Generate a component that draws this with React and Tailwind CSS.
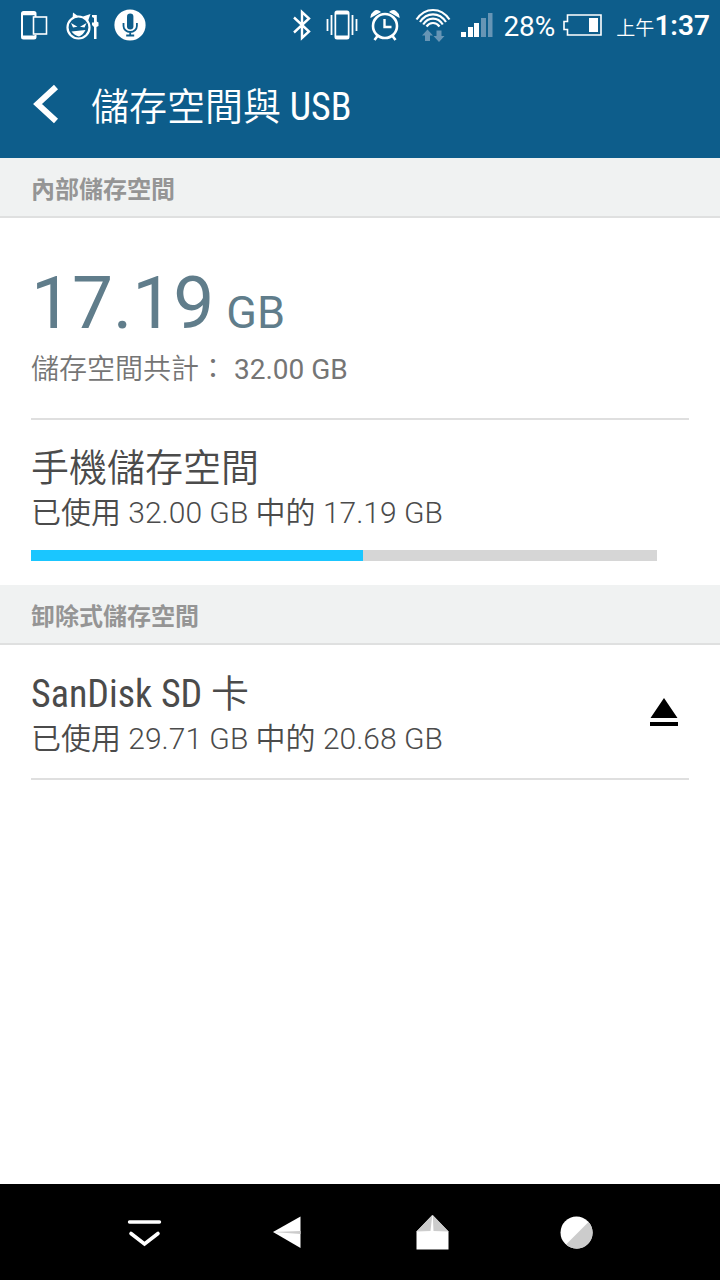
const fontSans = "font-[Roboto,'Noto_Sans_CJK_TC',sans-serif]";
const fontCondensed = "font-['Roboto_Condensed',Roboto,'Noto_Sans_CJK_TC',sans-serif]";

function PhoneLinkIcon() {
  return (
    <svg width="28" height="32" viewBox="0 0 28 32" fill="none" aria-hidden="true">
      <path fill="#fff" fillRule="evenodd" d="M3.500 2h10.500q2.500 0 2.500 2.500V8h-2V6.200H3V26.500h11.500V26h2v2q0 2.500-2.500 2.500H3.500Q1 30.500 1 28V4.500Q1 2 3.500 2Z" />
      <rect x="13.500" y="8" width="13" height="17" stroke="#fff" strokeWidth="1.600" />
    </svg>
  );
}

function DevilIcon() {
  return (
    <svg width="34" height="32" viewBox="0 0 34 32" fill="none" aria-hidden="true">
      <circle cx="12.500" cy="18.500" r="11" stroke="#fff" strokeWidth="2.200" />
      <path fill="#fff" d="M7 3.500 12.500 7.500 6.500 10ZM24.500 5 22 12l-5-4.500Z" />
      <path fill="#fff" d="M5 14 11.500 17.800 7 18.500ZM20.500 14 14 17.800 18.500 18.500ZM5.500 22.500 19.500 21 Q17 26 13 27.500 8.500 26.500 5.500 22.500Z" />
      <path fill="#fff" d="M26 6h4.800v6.500l1.700 1v3.500l-2 1V30h-2.500V18l-2-2v-2.500h2V9l-2-1Z" />
    </svg>
  );
}

function MicIcon() {
  return (
    <svg width="32" height="32" viewBox="0 0 32 32" fill="none" aria-hidden="true">
      <circle cx="16" cy="16" r="15.600" fill="#fff" />
      <rect x="13" y="4.500" width="6.400" height="16" rx="3.200" fill="#0d5d8b" />
      <path d="M9.500 14v3a6.700 6 0 0 0 13.400 0v-3M16.200 23v4M12.200 26.500h8" stroke="#0d5d8b" strokeWidth="1.800" />
    </svg>
  );
}

function BluetoothIcon() {
  return (
    <svg width="18" height="32" viewBox="0 0 18 32" fill="none" aria-hidden="true">
      <path d="M1 8.500 16 22.500 9 29V3l7 6.500L1 23.500" stroke="#fff" strokeWidth="2.400" />
    </svg>
  );
}

function VibrateIcon() {
  return (
    <svg width="34" height="32" viewBox="0 0 34 32" fill="none" aria-hidden="true">
      <path fill="#fff" fillRule="evenodd" d="M12 1.500h10q2.500 0 2.500 2.500v24q0 2.500-2.500 2.500H12q-2.500 0-2.500-2.500V4q0-2.500 2.500-2.500ZM11.200 5.500v21h11.600v-21Z" />
      <path d="M6.500 6v20M27.500 6v20" stroke="#fff" strokeWidth="1.800" />
      <path d="M2.500 10v12M31.500 10v12" stroke="#fff" strokeWidth="1.800" />
    </svg>
  );
}

function AlarmIcon() {
  return (
    <svg width="32" height="32" viewBox="0 0 32 32" fill="none" aria-hidden="true">
      <circle cx="16" cy="17" r="12" stroke="#fff" strokeWidth="2.600" />
      <path d="M15.500 10v8h7" stroke="#fff" strokeWidth="2.400" />
      <path d="m8.500 27-3 4M23.500 27l3 4" stroke="#fff" strokeWidth="2.600" />
      <path fill="#fff" d="M1.500 9Q1 5 4.500 2.500 8-.5 12 3ZM30.500 9Q31 5 27.500 2.500 24-.5 20 3Z" />
    </svg>
  );
}

function WifiIcon() {
  return (
    <svg width="36" height="34" viewBox="0 0 36 34" fill="none" aria-hidden="true">
      <g stroke="#fff" strokeWidth="2.200">
        <path d="M1.500 11.500Q8 2 18 2T34.500 11.500" />
        <path d="M5 14Q10 6.300 18 6.300T31 14" />
        <path d="M8.200 16.500Q12 10.600 18 10.600T27.800 16.500" />
        <path d="M11.500 18.500Q14 15 18 15T24.500 18.500" />
      </g>
      <path fill="#6795b5" d="m12.500 21.500 5.500 6h-3V33h-5v-5.500H7ZM21.500 22.500h5V28h3L24 34l-5.500-6h3Z" />
    </svg>
  );
}

function SignalIcon() {
  return (
    <svg width="32" height="26" viewBox="0 0 32 26" aria-hidden="true">
      <path fill="#fff" d="M0 20h5v5H0zM7 15h5v10H7zM13 11h5v14h-5z" />
      <path fill="#6795b5" d="M20 6h5v19h-5zM27 1h4.500v24H27z" />
    </svg>
  );
}

function BatteryIcon() {
  return (
    <svg width="40" height="22" viewBox="0 0 40 22" fill="none" aria-hidden="true">
      <path d="M4.500 1H38v20H4.500v-5.500H1v-8h3.500Z" stroke="#fff" strokeWidth="1.600" />
      <path fill="#fff" d="M26 4h9v14h-9z" />
    </svg>
  );
}

function StatusBar() {
  return (
    <div className="flex h-[50px] items-center justify-between pl-5 pr-[10px] text-white">
      <div className="flex items-center gap-[18px]">
        <PhoneLinkIcon />
        <DevilIcon />
        <div className="-ml-1"><MicIcon /></div>
      </div>
      <div className="flex items-center">
        <div className="flex items-center gap-[10px]">
          <BluetoothIcon />
          <div className="ml-1"><VibrateIcon /></div>
          <AlarmIcon />
          <div className="ml-1"><WifiIcon /></div>
          <SignalIcon />
          <span className="pt-1 text-[28px] leading-8">28%</span>
          <div className="-ml-0.5"><BatteryIcon /></div>
        </div>
        <div className="ml-[13px] flex items-baseline pt-1">
          <span className="text-[19px] font-[350] leading-8">上午</span>
          <span className="text-[28px] font-semibold leading-8">1:37</span>
        </div>
      </div>
    </div>
  );
}

function SectionHeader({ children }) {
  return (
    <h2 className="flex h-[60px] items-center border-b-2 border-[#dfe0e0] bg-[#f0f2f2] px-[31px] pt-[6px] text-[24px] font-bold leading-8 text-[#959595]">
      {children}
    </h2>
  );
}

function StorageText({ title, used }) {
  return (
    <div>
      <h3 className={`${fontCondensed} text-[38px] font-normal leading-[48px] text-[#4b4b4b]`}>{title}</h3>
      <p className="text-[30px] font-[350] leading-[42px] text-[#4b4b4b]">{used}</p>
    </div>
  );
}

function NavButton({ label, children }) {
  return (
    <button type="button" aria-label={label} className="flex h-24 items-center justify-center">
      <svg width="36" height="36" viewBox="0 0 36 36" fill="none" aria-hidden="true">{children}</svg>
    </button>
  );
}

export default function App() {
  const usedShare = 53.1;
  return (
    <div lang="zh-Hant" className={`${fontSans} flex min-h-screen flex-col bg-white`}>
      <header className="bg-[#0d5d8b]">
        <StatusBar />
        <div className="flex h-[108px] items-center gap-8 pl-[31px] text-white">
          <button type="button" aria-label="返回">
            <svg width="28" height="40" viewBox="0 0 28 40" fill="none" aria-hidden="true">
              <path d="M25 3 6.500 20 25 37" stroke="#fff" strokeWidth="6" />
            </svg>
          </button>
          <h1 className={`${fontCondensed} pt-[6px] text-[38px] font-normal leading-[48px]`}>
            <span className="font-[350]">儲存空間與</span> USB
          </h1>
        </div>
      </header>

      <main className="flex-1">
        <SectionHeader>內部儲存空間</SectionHeader>
        <section className="mx-[31px] border-b-2 border-[#dfdfdf] pb-[29px] pt-[47px]">
          <p className="flex items-baseline gap-3 leading-[76px] text-[#607d8b]">
            <span className="text-[73px]">17.19</span>
            <span className="text-[45px]">GB</span>
          </p>
          <p className="text-[28px] leading-[38px] text-[#757575]">
            <span className="font-[350]">儲存空間共計：</span> 32.00 GB
          </p>
        </section>
        <section className="px-[31px] pb-6 pt-6">
          <StorageText
            title={<span className="font-[350]">手機儲存空間</span>}
            used="已使用 32.00 GB 中的 17.19 GB"
          />
          <div
            role="progressbar"
            aria-label="手機儲存空間"
            aria-valuenow={usedShare}
            className="mr-8 mt-4 h-[11px] bg-[#d6d6d6]"
          >
            <div className="h-full bg-[#1ac6ff]" style={{ width: `${usedShare}%` }} />
          </div>
        </section>
        <SectionHeader>卸除式儲存空間</SectionHeader>
        <section className="mx-[31px] flex items-center justify-between border-b-2 border-[#dfdfdf] pb-[18px] pt-[25px]">
          <StorageText
            title={<>SanDisk SD <span className="font-[350]">卡</span></>}
            used="已使用 29.71 GB 中的 20.68 GB"
          />
          <button type="button" aria-label="卸除 SD 卡" className="mb-[6px] mr-[11px]">
            <svg width="28" height="28" viewBox="0 0 28 28" aria-hidden="true">
              <path d="M14 0 27.500 20H.5ZM0 24h28v4H0Z" fill="#000" />
            </svg>
          </button>
        </section>
      </main>

      <nav className="grid h-24 grid-cols-4 bg-black px-[10%]">
        <NavButton label="隱藏導覽列">
          <path d="M3.500 8h30" stroke="#fff" strokeWidth="3.400" strokeLinecap="round" />
          <path d="M5 19.500 18.500 30 32 19.500" stroke="#fff" strokeWidth="3.600" strokeLinecap="round" />
        </NavButton>
        <NavButton label="返回">
          <path d="M3 18 30.500 2.500v31.500Z" fill="#fff" />
          <path d="m3 18 27.500-1v3Z" fill="#ccc" />
        </NavButton>
        <NavButton label="主畫面">
          <path d="M18.500 1 34.500 17.500v18H2.500v-18Z" fill="#fff" />
          <path d="M18.300 1 16.500 17 2.500 17.500ZM18.700 1 19.500 17l15 .5Z" fill="#ccc" />
        </NavButton>
        <NavButton label="最近使用的應用程式">
          <circle cx="18.500" cy="18.500" r="16" fill="#fff" />
          <path d="M30.500 7.900A16 16 0 0 1 8 30.600Z" fill="#ccc" />
        </NavButton>
      </nav>
    </div>
  );
}
